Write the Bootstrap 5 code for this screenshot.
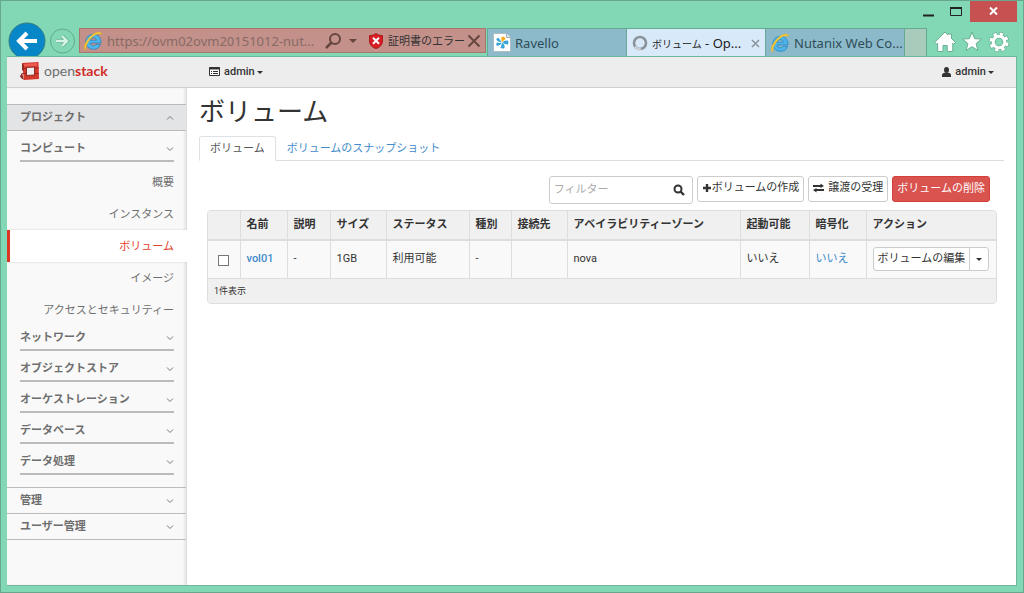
<!DOCTYPE html>
<html lang="ja">
<head>
<meta charset="utf-8">
<meta name="viewport" content="width=device-width, initial-scale=1">
<title>ボリューム - OpenStack Dashboard</title>
<link href="https://cdn.jsdelivr.net/npm/bootstrap@5.3.0/dist/css/bootstrap.min.css" rel="stylesheet">
<style>
:root{--jp:Roboto,"Noto Sans CJK JP",sans-serif;--ui:"Noto Sans","Noto Sans CJK JP",sans-serif}
body{font:11px/16px var(--jp);color:#333;background:#82d8b5}
svg{display:block;flex:none}
button{font-family:inherit}
a{text-decoration:none;color:#428bca}
.frame{border:1px solid #66a78e;padding:0 6px 6px}
/* window chrome */
.chrome{font-family:var(--ui);font-size:13px}
.chrome button{border:0;background:none;padding:0;color:inherit}
.title-row{height:27px}
.title-row .win-close{background:#c75050;width:47px;height:21px}
.title-row .win-btn{width:27px;height:21px}
.bar-row{height:28px}
.nav-btns{width:72px}
.back-wrap{height:34px;overflow:hidden}
.address{width:407px;height:25px;background:#c3918a;border:1px solid #a9756f;padding:0 4px 0 3px}
.address input{border:0;background:none;padding:0;width:213px;color:#876a66;outline:0}
.cert{font-size:11px;color:#111}
.btab{width:139px;background:#8cbacb;border:1px solid #65a994;border-width:1px 0 0 1px;color:#2e4d58;padding:1px 5px 0 5px}
.btab.current{background:#d8eafa;color:#222}
.btab .tab-ja{font-size:10px}
.new-tab{width:23px;background:#a9cbbb!important;border:1px solid #65a994!important;border-bottom:0!important}
.tools{gap:5px;padding:0 7px}
/* dashboard */
.page{background:#fff;border:1px solid #6fb89b;border-width:1px 1px 1px 0}
.topbar{height:31px;background:#ededed;border-bottom:1px solid #d0d0d0;padding:0 22px 0 13px}
.brand{width:189px;font:14px/16px Lato,sans-serif;color:#6d6e70;padding-bottom:2px}
.brand b{color:#d02c2b;font-weight:700}
.user-btn{border:0;background:none;padding:0;font-weight:500;color:#333}
.user-btn .user-name{margin:0 2px 0 0}
.caret{border:3px solid transparent;border-top-color:currentColor;border-bottom:0}
.sidebar{width:180px;background:#f9f9f9;border-right:1px solid #ddd;box-shadow:inset -2px 0 2px #e9e9e9;padding-top:16px;color:#6e6e6e}
.sidebar button{border:0;background:none;color:inherit;font-weight:700;width:100%;text-align:left}
.sidebar .panel-head{height:26px;border-top:1px solid #bbb;padding:0 12px 0 13px}
.sidebar .panel-head.open{height:27px;background:#e3e4e6;border-bottom:1px solid #bbb}
.sidebar .panel-last{border-bottom:1px solid #bbb;height:27px}
.services{padding:6px 0}
.service{margin-bottom:6px}
.service.open{margin-bottom:0}
.service>button{padding:4px 0 3px;margin:0 12px 0 13px;width:calc(100% - 25px);border-bottom:2px solid #bbb}
.side-link{height:32px;padding:2px 12px 0;color:#6e6e6e;justify-content:flex-end}
.side-link.active{background:#fff;color:#e3402b;border-left:3px solid #dd3524;margin-right:-1px;padding-right:13px;box-shadow:0 0 2px #ccc;clip-path:inset(-3px 0 -3px 0)}
.content-area{padding:8px 12px 0}
h1{font:400 26px/32px var(--jp);margin:0 0 8px}
.nav-tabs{--bs-nav-tabs-border-color:#ddd}
.nav-tabs .nav-link{padding:4px 10px 3px;border-radius:3px 3px 0 0;color:#428bca}
.nav-tabs .nav-link.active{color:#555}
.toolbar{padding:15px 14px 0 0;gap:4px;height:49px}
.toolbar .btn,.row-action .btn{font-size:11px;line-height:16px;border:1px solid #ccc;border-radius:3px;color:#333;background:#fff;height:26px}
.toolbar .btn{padding:2px 4px 4px}
.toolbar .btn.remove{background:#d9534f;border-color:#d43f3a;color:#fff;padding:3px 4px}
.filter{width:144px;height:28px;border:1px solid #ccc;border-radius:3px;padding:0 7px 0 4px}
.filter input{border:0;padding:0;width:100%;min-width:0;outline:0;background:none}
.filter input::placeholder{color:#aaa}
.filter button{border:0;background:none;padding:0}
.grid-box{margin:0 7px 0 8px;border:1px solid #ddd;border-radius:4px;overflow:hidden;background:#f9f9f9}
.grid-box table{table-layout:fixed;width:100%}
.grid-box th,.grid-box td{padding:0 6px;border-left:1px solid #ddd;height:38px}
.grid-box tr>:first-child{border-left:0}
.grid-box thead th{height:29px;background:#f0f0f0;border-bottom:2px solid #ddd}
.grid-box tfoot td{height:25px;background:#f0f0f0;border-top:1px solid #ddd;font-size:9px}
.grid-box input{width:11px;height:11px;display:block;margin:3px auto 0;appearance:none;border:1px solid #777;background:#fff}
.row-action .btn{height:24px;padding:2px 4px}
.row-action .btn+.btn{border-left:1px solid #ccc;padding:2px 6px}
</style>
</head>
<body>
<svg width="0" height="0" class="position-absolute" aria-hidden="true">
<defs>
<symbol id="ie" viewBox="0 0 20 20"><path fill-rule="evenodd" d="M18 12H7.300c.4 3.200 4.400 3.500 5.600 1.400h4.600c-1 3.200-3.800 4.900-7 4.900-4.400 0-7.700-3.100-7.700-7.400 0-4.500 3.200-7.600 7.500-7.600 4.700 0 8.100 3.300 7.700 8.700zM7.300 9.200h6c-.2-3.200-5.500-3.300-6 0z" fill="#4eb4ea" stroke="#2180bd" stroke-width=".7"/><path d="M2.800 19.200C-1.500 18 4 6.500 11 2.600c3.700-2 7.600-2.300 7.600.9C16.500 2 13 3 10 5.400 5.500 9 2.300 15 2.800 19.200z" fill="#fbd03a" stroke="#d9a011" stroke-width=".4"/></symbol>
<symbol id="down" viewBox="0 0 8 8"><path d="M1 2.500l3 3 3-3" fill="none" stroke="#777"/></symbol>
</defs>
</svg>
<div class="frame d-flex flex-column min-vh-100">
<header class="chrome">
<div class="title-row d-flex justify-content-end">
<button class="win-btn" aria-label="最小化"><svg width="27" height="21"><path d="M7 14.500h11" stroke="#222" stroke-width="2"/></svg></button>
<button class="win-btn" aria-label="最大化"><svg width="27" height="21"><path d="M7.500 6.500h11v8h-11z" fill="none" stroke="#222"/><path d="M7 7h12" stroke="#222" stroke-width="2"/></svg></button>
<button class="win-close" aria-label="閉じる"><svg width="47" height="21"><path d="M20 6.500l7 7m0-7l-7 7" stroke="#fff" stroke-width="2"/></svg></button>
</div>
<div class="bar-row d-flex">
<div class="nav-btns d-flex align-items-end gap-1">
<button class="back-wrap" aria-label="戻る"><svg width="39" height="38" viewBox="0 0 39 38"><circle cx="20" cy="19" r="18" fill="#0786c8" stroke="#327d86"/><path d="M30 19H13m7-8l-8 8 8 8" fill="none" stroke="#fff" stroke-width="4"/></svg></button>
<button aria-label="進む"><svg width="27" height="28" viewBox="0 0 27 28"><circle cx="12.500" cy="13" r="12" fill="none" stroke="#62a98d"/><path d="M6 13h11m-5-5l5 5-5 5" fill="none" stroke="#67b392" stroke-width="4"/><path d="M6 13h11m-5-5l5 5-5 5" fill="none" stroke="#d4f2e5" stroke-width="2.400"/></svg></button>
</div>
<div class="address d-flex align-items-center">
<svg width="20" height="20"><use href="#ie"/></svg>
<input class="ms-1" aria-label="アドレス" value="https://ovm02ovm20151012-nut...">
<button class="ms-1" aria-label="検索"><svg width="18" height="18" viewBox="0 0 18 18"><circle cx="11" cy="7" r="5" fill="none" stroke="#65473f" stroke-width="2"/><path d="M7.500 10.500L2 16" stroke="#65473f" stroke-width="2.500"/></svg></button>
<button class="mx-1" aria-label="履歴"><svg width="14" height="8"><path d="M3 2h8L7 6z" fill="#65473f"/></svg></button>
<button class="cert d-flex align-items-center ms-1 text-nowrap"><svg class="me-1" width="16" height="16" viewBox="0 0 16 16"><path d="M8 .5c2 1.500 4 2 6.500 2V8c0 4-3 6.500-6.500 7.500C4.500 14.500 1.500 12 1.500 8V2.500C4 2.500 6 2 8 .5z" fill="#da1d25" stroke="#a81b20"/><path d="M5 4.800l6 6m0-6l-6 6" stroke="#fff" stroke-width="2"/></svg>証明書のエラー</button>
<button class="ms-auto" aria-label="中止"><svg width="14" height="14"><path d="M1.500 1.500l11 11m0-11l-11 11" stroke="#65473f" stroke-width="2"/></svg></button>
</div>
<a href="#" class="btab ms-auto d-flex align-items-center"><svg class="me-1" width="18" height="20" viewBox="0 0 18 20"><path d="M.5.5h13l4 4v14H.5z" fill="#fff" stroke="#aebdc4"/><path d="M13.500.5v4h4" fill="#e8eef1" stroke="#9aabb3"/><path d="M9.300 9.500C8 7 8 5 9 3.500c2 0 3.500 1 3.500 2.500-1 1-2.500 1.500-3.200 3.500z" fill="#f7ac1d"/><path d="M9.500 9.800c1.500-2 3-2.500 5.500-2 .8 1.500.4 3-.5 4-1.500-.8-3-.8-5-2zM9 10c2.300.8 3 2.500 2.500 5-1.300.8-3 .6-4-.3.800-1.500 1-2.700 1.500-4.700zM8.700 9.800c-1 2.200-2.500 3-4.900 2.900-.7-1-.6-2.300.2-3.200 1.600.6 3 .5 4.700.3zM8.800 9.300C6.500 9.200 4.500 8.500 3.300 6.500c.6-1.300 1.700-1.600 2.700-1.400.5 2 1.800 2.700 2.800 4.200z" fill="#35a4d6"/></svg>Ravello</a>
<a href="#" class="btab current d-flex align-items-center text-nowrap"><svg class="me-1" width="16" height="16"><circle cx="8" cy="8" r="6" fill="none" stroke="#8c9299" stroke-width="2.600"/><path d="M3 11.500a6 6 0 0 0 6 2.400" fill="none" stroke="#c6cdd4" stroke-width="2.600"/></svg><span><span class="tab-ja">ボリューム</span> - Op...</span><svg class="ms-auto" width="9" height="9"><path d="M1 1l7 7m0-7L1 8" stroke="#8d959c" stroke-width="1.600"/></svg></a>
<a href="#" class="btab d-flex align-items-center text-nowrap ps-1"><svg class="me-1" width="20" height="20"><use href="#ie"/></svg>Nutanix Web Co...</a>
<button class="new-tab" aria-label="新しいタブ"></button>
<div class="tools d-flex align-items-center">
<button aria-label="ホーム"><svg width="22" height="22" viewBox="0 0 22 22"><path d="M11 1l3 3V3h3.500v4.500l4 4-1.700 1.700-1-1V20.500h-5.600v-6H9v6H3.600v-8.300l-1 1L.7 11.500z" fill="#fff" stroke="#68ae92"/></svg></button>
<button aria-label="お気に入り"><svg width="22" height="22" viewBox="0 0 22 22"><path d="M11 1l2.600 6.700 7 .4-5.500 4.500 1.900 7-6-3.900-6 3.900 1.900-7L1.400 8.100l7-.4z" fill="#fff" stroke="#68ae92"/></svg></button>
<button aria-label="ツール"><svg width="22" height="22" viewBox="0 0 22 22"><g fill="none"><circle cx="11" cy="11" r="8" stroke="#68ae92" stroke-width="4.600" stroke-dasharray="4.283 2"/><circle cx="11" cy="11" r="5.800" stroke="#68ae92" stroke-width="4.600"/><circle cx="11" cy="11" r="8" stroke="#fff" stroke-width="3.200" stroke-dasharray="3.283 3" stroke-dashoffset="-.5"/><circle cx="11" cy="11" r="5.800" stroke="#fff" stroke-width="3"/></g></svg></button>
</div>
</div>
</header>

<div class="page d-flex flex-column flex-grow-1">
<nav class="topbar d-flex align-items-center">
<a class="brand d-flex align-items-center" href="#"><svg class="me-1" width="20" height="20" viewBox="0 0 20 20"><path d="M2 2L18.500 1 19 18 4 19z" fill="#d5382d"/><path d="M2 2v7l2 1V5zM2 12l-2 3 1 2 3 2z" fill="#8f2922"/><path d="M6.500 6.500L14.500 6v8l-8 .5z" fill="#eee" stroke="#8f2922"/><path d="M2 7.500h4M2 12.500h4M15 7h4M15 12.500h4" stroke="#9f2a22"/><path d="M4 3l13-1v3L4 5.500z" fill="#ee5b4e"/></svg><span>open<b>stack</b></span></a>
<button class="user-btn d-flex align-items-center"><svg class="me-1" width="11" height="10"><path d="M.5.5h10v8H.5z" fill="#fff" stroke="#333"/><path d="M0 1.500h11" stroke="#333" stroke-width="2"/><path d="M2 4.500h1m1 0h5M2 6.500h1m1 0h5" stroke="#333"/></svg><span class="user-name">admin</span><span class="caret"></span></button>
<button class="user-btn d-flex align-items-center ms-auto"><svg class="me-1" width="9" height="11" viewBox="0 0 9 11"><ellipse cx="4.500" cy="3" rx="2.500" ry="3" fill="#333"/><path d="M0 10V8q0-2 3-2.300h3Q9 6 9 8v2z" fill="#333"/></svg><span class="user-name">admin</span><span class="caret"></span></button>
</nav>
<div class="d-flex flex-grow-1">
<aside class="sidebar flex-shrink-0">
<button class="panel-head open d-flex align-items-center justify-content-between">プロジェクト<svg width="8" height="8"><path d="M1 5.500l3-3 3 3" fill="none" stroke="#777"/></svg></button>
<div class="services">
<div class="service open"><button class="d-flex align-items-center justify-content-between">コンピュート<svg width="8" height="8"><use href="#down"/></svg></button>
<div class="pt-1">
<a class="side-link d-flex align-items-center" href="#">概要</a>
<a class="side-link d-flex align-items-center" href="#">インスタンス</a>
<a class="side-link active d-flex align-items-center" href="#">ボリューム</a>
<a class="side-link d-flex align-items-center" href="#">イメージ</a>
<a class="side-link d-flex align-items-center" href="#">アクセスとセキュリティー</a>
</div></div>
<div class="service"><button class="d-flex align-items-center justify-content-between">ネットワーク<svg width="8" height="8"><use href="#down"/></svg></button></div>
<div class="service"><button class="d-flex align-items-center justify-content-between">オブジェクトストア<svg width="8" height="8"><use href="#down"/></svg></button></div>
<div class="service"><button class="d-flex align-items-center justify-content-between">オーケストレーション<svg width="8" height="8"><use href="#down"/></svg></button></div>
<div class="service"><button class="d-flex align-items-center justify-content-between">データベース<svg width="8" height="8"><use href="#down"/></svg></button></div>
<div class="service"><button class="d-flex align-items-center justify-content-between">データ処理<svg width="8" height="8"><use href="#down"/></svg></button></div>
</div>
<button class="panel-head d-flex align-items-center justify-content-between">管理<svg width="8" height="8"><use href="#down"/></svg></button>
<button class="panel-head panel-last d-flex align-items-center justify-content-between">ユーザー管理<svg width="8" height="8"><use href="#down"/></svg></button>
</aside>
<main class="content-area flex-grow-1">
<h1>ボリューム</h1>
<ul class="nav nav-tabs">
<li class="nav-item"><a class="nav-link active" href="#">ボリューム</a></li>
<li class="nav-item"><a class="nav-link" href="#">ボリュームのスナップショット</a></li>
</ul>
<div class="toolbar d-flex justify-content-end">
<div class="filter d-flex align-items-center"><input type="text" placeholder="フィルター" aria-label="フィルター"><button aria-label="検索"><svg width="12" height="12"><circle cx="5" cy="5" r="3.500" fill="none" stroke="#333" stroke-width="2"/><path d="M7.500 7.500l3.500 3.500" stroke="#333" stroke-width="2.400"/></svg></button></div>
<button class="btn d-flex align-items-center"><svg width="10" height="10"><path d="M5 1v8M1 5h8" stroke="#333" stroke-width="2.400"/></svg>ボリュームの作成</button>
<button class="btn d-flex align-items-center"><svg class="me-1" width="11" height="10"><path d="M0 3h8M3 7h8" stroke="#333" stroke-width="1.800"/><path d="M7.500.5L11 3 7.500 5zM3.500 5L0 7l3.500 2.500z" fill="#333"/></svg>譲渡の受理</button>
<button class="btn remove">ボリュームの削除</button>
</div>
<div class="grid-box">
<table>
<colgroup><col style="width:32px"><col style="width:47px"><col style="width:43px"><col style="width:56px"><col style="width:83px"><col style="width:42px"><col style="width:56px"><col><col style="width:69px"><col style="width:57px"><col style="width:130px"></colgroup>
<thead><tr><th></th><th>名前</th><th>説明</th><th>サイズ</th><th>ステータス</th><th>種別</th><th>接続先</th><th>アベイラビリティーゾーン</th><th>起動可能</th><th>暗号化</th><th>アクション</th></tr></thead>
<tbody><tr><td><input type="checkbox" aria-label="vol01 を選択"></td><td><a href="#" class="fw-medium">vol01</a></td><td>-</td><td>1GB</td><td>利用可能</td><td>-</td><td></td><td>nova</td><td>いいえ</td><td><a href="#">いいえ</a></td><td><div class="btn-group row-action"><button class="btn text-nowrap">ボリュームの編集</button><button class="btn d-flex align-items-center" aria-label="その他の操作"><span class="caret"></span></button></div></td></tr></tbody>
<tfoot><tr><td colspan="11">1件表示</td></tr></tfoot>
</table>
</div>
</main>
</div>
</div>
</div>
<script src="https://cdn.jsdelivr.net/npm/bootstrap@5.3.0/dist/js/bootstrap.bundle.min.js"></script>
</body>
</html>
